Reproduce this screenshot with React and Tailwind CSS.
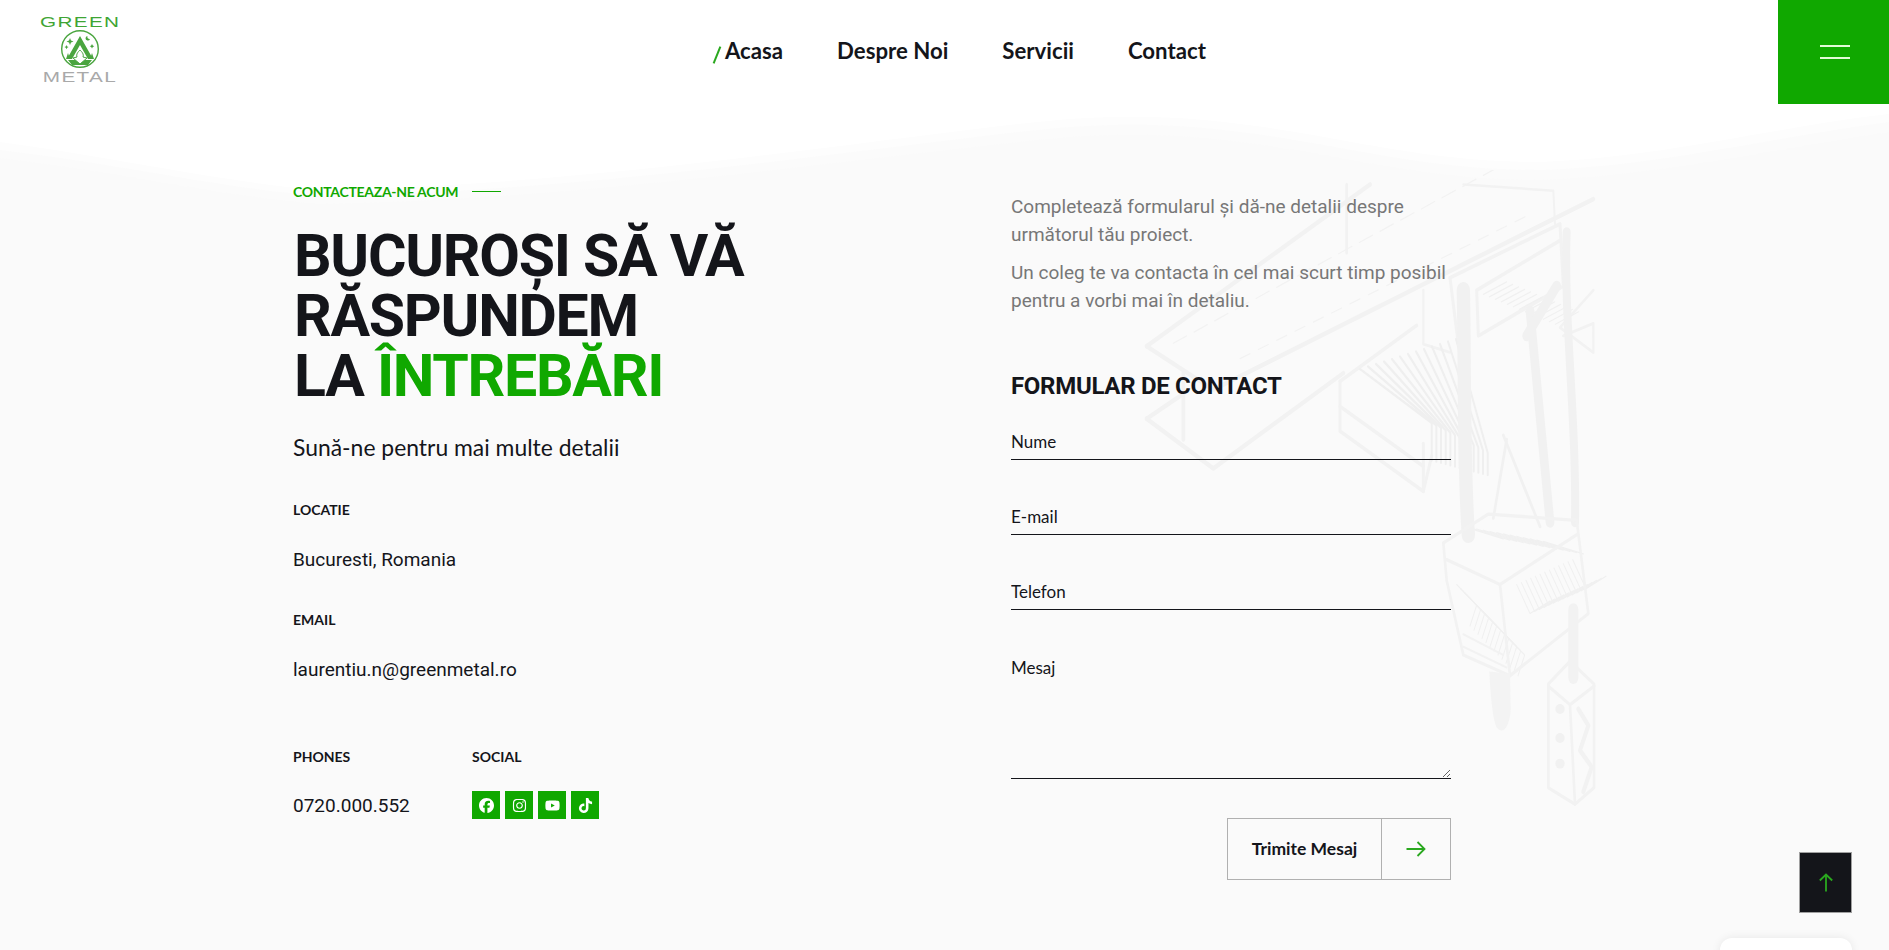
import React from 'react';
import { FaFacebook, FaInstagram, FaYoutube, FaTiktok } from 'react-icons/fa6';

const Logo = () => (
  <div className="flex flex-col items-center w-[78px] leading-none text-center">
    <span className="font-['Liberation_Sans'] text-[15px] leading-[13px] text-[#3fa535] tracking-[1px] scale-x-[1.38]">GREEN</span>
    <svg viewBox="0 0 40 40" className="w-[40px] h-[40px] my-[1px]">
      <circle cx="20" cy="20" r="18.3" fill="none" stroke="#4aa53f" strokeWidth="1.4" />
      <path d="M20 7 L33 30 L28 30 L20 16 L12 30 L7 30 Z" fill="#4aa53f" />
      <path d="M6 30 L8 24 L10 30 Z M34 30 L32 24 L30 30 Z M8 31 L32 31 L28 36 L12 36 Z" fill="#4aa53f" />
      <path d="M20 21 c2 2 4 4 3 7 l4 1 -7 6 -7-6 4-1 c-1-3 1-5 3-7z" fill="#ffffff" stroke="#4aa53f" strokeWidth="1" />
      <path d="M10 9 l1 2.5 2.5 1 -2.5 1 -1 2.5 -1-2.5 -2.5-1 2.5-1z M6.5 16 l.7 1.4 1.4.7 -1.4.7 -.7 1.4 -.7-1.4 -1.4-.7 1.4-.7z M32 15 l.8 1.5 1.5.8 -1.5.8 -.8 1.5 -.8-1.5 -1.5-.8 1.5-.8z M27.5 7 a2.3 2.3 0 1 0 2.5 3 a2.2 2.2 0 0 1 -2.5-3z" fill="#4aa53f" />
    </svg>
    <span className="font-['Liberation_Sans'] text-[15px] leading-[13px] text-[#a9a9a9] tracking-[1px] scale-x-[1.38]">METAL</span>
  </div>
);

const Wave = () => (
  <svg className="absolute left-0 top-[90px] w-full h-[130px]" viewBox="0 0 1889 130" preserveAspectRatio="none">
    <path d="M0 52 C 120 68 220 92 320 100 C 560 96 800 60 1000 36 C 1100 24 1160 24 1240 34 C 1340 46 1420 72 1540 72 C 1660 68 1780 36 1889 24 L1889 130 L0 130Z" fill="#fdfdfd" />
    <path d="M0 60 C 120 74 220 98 320 106 C 560 102 800 68 1000 44 C 1100 32 1160 32 1240 42 C 1340 54 1420 80 1540 80 C 1660 76 1780 46 1889 32 L1889 130 L0 130Z" fill="#fbfbfb" />
    <path d="M0 68 C 120 82 220 106 320 114 C 560 110 800 76 1000 54 C 1100 42 1160 42 1240 52 C 1340 64 1420 90 1540 90 C 1660 86 1780 58 1889 42 L1889 130 L0 130Z" fill="#fafafa" />
  </svg>
);

const fins = Array.from({ length: 13 }, (_, i) => i);
const beamHatch = Array.from({ length: 16 }, (_, i) => i);

const Machine = () => (
  <svg className="absolute left-[1130px] top-[170px] w-[480px] h-[650px]" viewBox="0 0 1440 1568" preserveAspectRatio="none" fill="none" stroke="#f2f2f2" strokeLinejoin="round" strokeLinecap="round">
    <g strokeWidth="11">
      <path d="M50 425 L720 35" />
      <path d="M50 425 L250 530 L1390 70" />
      <path d="M160 490 L160 650" />
      <path d="M50 600 L160 540" />
      <path d="M50 600 L250 720 L640 490" />
      <path d="M650 35 L650 200" strokeWidth="8" />
      <path d="M1000 35 L1270 50 L1275 130" strokeWidth="6" />
    </g>
    <g strokeWidth="3">
      {beamHatch.map((i) => (
        <path key={i} d={`M${130 + i * 62} ${418 - i * 27} l40 -18`} />
      ))}
      {beamHatch.map((i) => (
        <path key={i} d={`M${330 + i * 55} ${455 - i * 22} l30 -12`} />
      ))}
    </g>
    <g strokeWidth="9">
      <path d="M630 510 L630 630 L880 775 L905 690" />
      <path d="M630 510 L860 375" />
      <path d="M630 570 L880 715" />
      <path d="M880 660 L880 775" />
      <path d="M960 260 L1290 130 L1300 280 L1045 400 L1040 290 L1290 170" />
      <path d="M960 260 L985 420" />
      <path d="M880 290 L880 420 L960 440 M1390 290 L1290 380 L1390 440 L1390 370 L1300 400" strokeWidth="7" />
    </g>
    <g strokeWidth="6" stroke="#efefef">
      {fins.map((i) => (
        <path key={i} d={`M${690 + i * 24} ${480 - i * 6} L${905 + i * 14} ${610 + i * 6} L${905 + i * 14} ${700 + i * 3}`} />
      ))}
    </g>
    <g strokeWidth="3" stroke="#f0f0f0">
      {fins.map((i) => (
        <path key={i} d={`M${1060 + i * 18} ${300 + i * 6} l70 -30 M${1000 + i * 20} ${860 + i * 3} l120 30 M${980 + i * 12} ${1000 + i * 10} l60 50 l-20 50 M${1160 + i * 14} ${1000 - i * 5} l40 70 l60 -30`} />
      ))}
    </g>
    <g stroke="#f1f1f1">
      <path d="M1000 290 C 1005 500 1000 700 1015 880" strokeWidth="40" />
      <path d="M1310 150 C 1300 350 1340 600 1335 850" strokeWidth="24" />
      <path d="M1200 340 L1260 850" strokeWidth="26" />
      <path d="M1280 280 L1190 400" strokeWidth="26" />
      <path d="M1130 650 L1090 840" strokeWidth="8" />
      <path d="M1120 640 L1230 860" strokeWidth="8" />
    </g>
    <g strokeWidth="8">
      <path d="M940 900 L1075 830 L1340 845 L1375 1070 L1140 1220 L1000 1170 L950 990 Z" />
      <path d="M950 940 L1110 1000 L1140 1220" />
      <path d="M1110 1000 L1340 880" />
      <path d="M1000 1150 L1130 1200 M1000 1120 L1120 1170" strokeWidth="5" />
    </g>
    <path d="M1078 1210 C 1082 1280 1090 1330 1100 1345 C 1120 1365 1140 1340 1142 1300 L1140 1215 Z" fill="#f3f3f3" stroke="none" />
    <path d="M1330 1060 L1330 1225" strokeWidth="30" stroke="#f2f2f2" />
    <g strokeWidth="8">
      <path d="M1255 1240 L1320 1185 L1392 1240 L1392 1490 L1335 1530 L1255 1490 Z" />
      <path d="M1255 1245 L1320 1290 L1392 1245 M1320 1290 L1335 1530" />
      <path d="M1345 1300 L1375 1340 L1350 1400 L1385 1440 L1360 1500" strokeWidth="12" />
      <ellipse cx="1290" cy="1300" rx="14" ry="12" fill="#f1f1f1" stroke="none" />
      <ellipse cx="1290" cy="1370" rx="14" ry="12" fill="#f1f1f1" stroke="none" />
      <ellipse cx="1290" cy="1432" rx="14" ry="12" fill="#f1f1f1" stroke="none" />
    </g>
  </svg>
);

const Label = ({ children }) => (
  <div className="font-['Lato'] font-bold text-[14px] leading-[20px] text-[#14151a] uppercase">{children}</div>
);

const socials = [FaFacebook, FaInstagram, FaYoutube, FaTiktok];

export default function App() {
  return (
    <div className="relative w-full h-[950px] overflow-hidden bg-[#fafafa] font-['Roboto',sans-serif] text-[#14151a]">
      <div className="absolute inset-x-0 top-0 h-[220px] bg-white" />
      <Wave />
      <Machine />

      <header className="relative flex items-start h-[104px]">
        <div className="pl-[41px] pt-[15px]">
          <Logo />
        </div>
        <nav className="absolute left-[725px] top-0 h-[102px] flex items-center gap-[54px] font-['Lato'] font-bold text-[22.2px] leading-none text-[#14151a]">
          <span className="relative">
            <span className="absolute left-[-9px] top-[6px] w-[2px] h-[18px] bg-[#2aa81f] rotate-[22deg]" />
            Acasa
          </span>
          <span>Despre Noi</span>
          <span>Servicii</span>
          <span>Contact</span>
        </nav>
        <button className="ml-auto w-[111px] h-[104px] bg-[#10a800] flex flex-col items-center justify-center gap-[10px] pl-[3px]">
          <span className="block w-[30px] h-[2px] bg-[#e2fbd8]" />
          <span className="block w-[30px] h-[2px] bg-[#e2fbd8]" />
        </button>
      </header>

      <main className="relative flex pl-[293px] pt-[76px]">
        <section className="w-[718px] shrink-0">
          <div className="flex items-center gap-[14px] h-[22px]">
            <span className="font-['Lato'] font-bold text-[14px] text-[#10a800] tracking-[-0.3px]">CONTACTEAZA-NE ACUM</span>
            <span className="block w-[29px] h-px bg-[#10a800]" />
          </div>
          <h1 className="mt-[24px] pl-[1px] font-['Roboto'] font-bold text-[59px] leading-[60px] tracking-[-1.3px] text-[#14151a] uppercase">
            Bucuroși să vă<br />Răspundem<br />la <span className="text-[#10a800]">Întrebări</span>
          </h1>
          <p className="mt-[25px] font-['Lato'] text-[22.9px] leading-[32px] text-[#14151a]">Sună-ne pentru mai multe detalii</p>
          <div className="mt-[37px]"><Label>Locatie</Label></div>
          <p className="mt-[28px] text-[19px] leading-[24px]">Bucuresti, Romania</p>
          <div className="mt-[38px]"><Label>Email</Label></div>
          <p className="mt-[28px] text-[19px] leading-[24px]">laurentiu.n@greenmetal.ro</p>
          <div className="mt-[65px] flex">
            <div className="w-[179px]">
              <Label>Phones</Label>
              <p className="mt-[27px] text-[19px] leading-[24px]">0720.000.552</p>
            </div>
            <div>
              <Label>Social</Label>
              <div className="mt-[24px] flex gap-[5px]">
                {socials.map((Icon, i) => (
                  <span key={i} className="w-[28px] h-[28px] bg-[#10a800] text-white flex items-center justify-center">
                    <Icon size={15} />
                  </span>
                ))}
              </div>
            </div>
          </div>
        </section>

        <section className="w-[440px] shrink-0 pt-[13px]">
          <p className="text-[19px] leading-[28px] text-[#777777]">Completează formularul și dă-ne detalii despre următorul tău proiect.</p>
          <p className="mt-[10px] text-[19px] leading-[28px] text-[#777777]">Un coleg te va contacta în cel mai scurt timp posibil pentru a vorbi mai în detaliu.</p>
          <h2 className="mt-[55px] font-['Roboto'] font-bold text-[24px] leading-[32px] tracking-[-0.3px] text-[#14151a] uppercase">Formular de contact</h2>
          <form className="mt-[23px] flex flex-col">
            {['Nume', 'E-mail', 'Telefon'].map((p) => (
              <input key={p} placeholder={p} className="h-[35px] mb-[40px] w-full bg-transparent border-b border-[#14151a] pb-[1px] font-['Lato'] text-[17px] text-[#14151a] placeholder:text-[#14151a] outline-none" />
            ))}
            <textarea placeholder="Mesaj" className="h-[129px] w-full bg-transparent border-b border-[#14151a] pt-[6px] font-['Lato'] text-[17px] leading-[24px] text-[#14151a] placeholder:text-[#14151a] outline-none resize-y block" />
            <div className="mt-[39px] flex justify-end">
              <button type="button" className="flex h-[62px] w-[224px] border border-[#b0b0b0] font-['Lato'] font-bold text-[17.5px] text-[#14151a]">
                <span className="w-[154px] h-full flex items-center justify-center border-r border-[#b0b0b0]">Trimite Mesaj</span>
                <span className="flex-1 flex items-center justify-center text-[#2aa81f]">
                  <svg width="20" height="16" viewBox="0 0 20 16" fill="none" stroke="currentColor" strokeWidth="1.8"><path d="M0.5 8 H18.5 M11.5 1 L18.5 8 L11.5 15" /></svg>
                </span>
              </button>
            </div>
          </form>
        </section>
      </main>

      <button className="absolute left-[1799px] top-[852px] w-[53px] h-[61px] bg-[#14151a] border border-[#a0a0a0] flex items-center justify-center text-[#2aa81f]">
        <svg width="14" height="19" viewBox="0 0 14 19" fill="none" stroke="currentColor" strokeWidth="1.8"><path d="M7 18.5 V1.5 M0.8 7.5 L7 1.5 L13.2 7.5" /></svg>
      </button>
      <div className="absolute left-[1720px] top-[938px] w-[132px] h-[40px] bg-white rounded-[12px] shadow-[0_0_10px_rgba(0,0,0,0.08)]" />
    </div>
  );
}
